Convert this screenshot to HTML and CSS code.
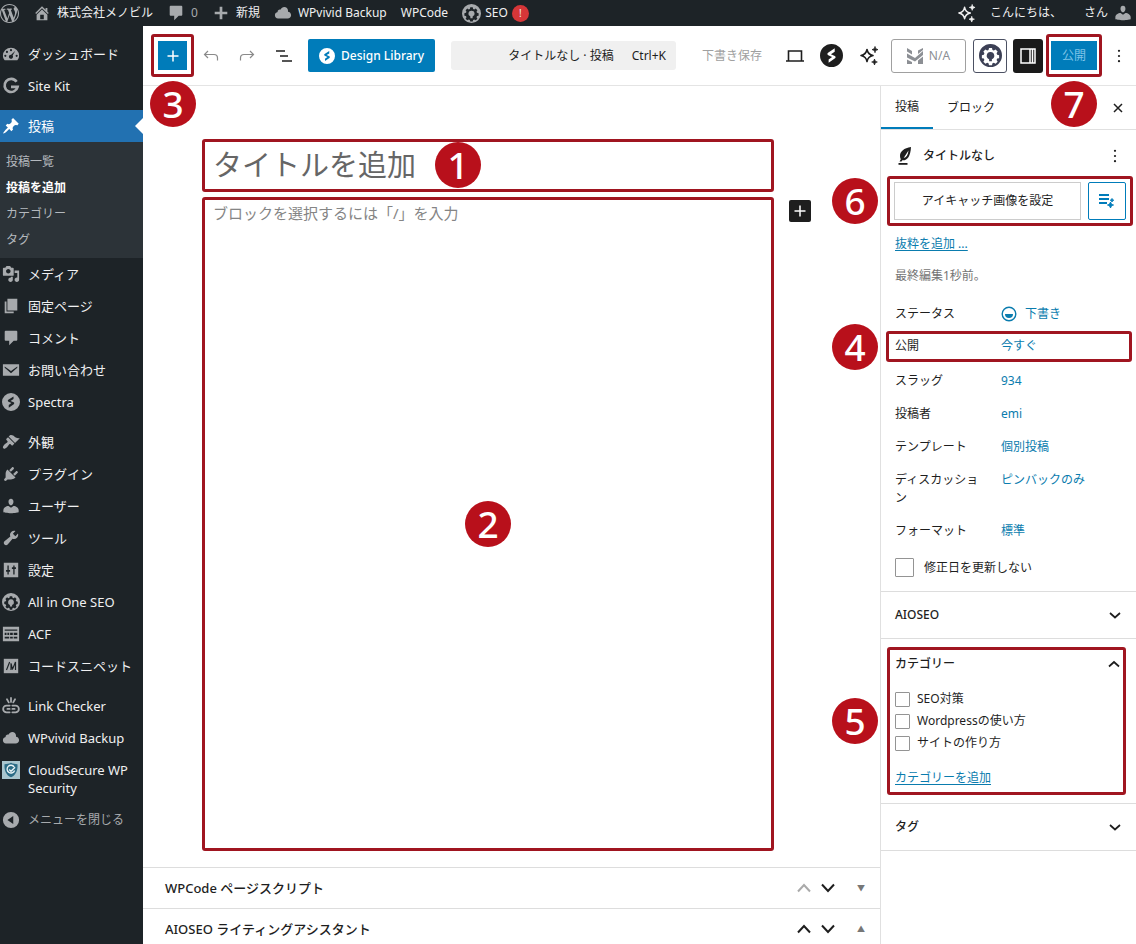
FILE: index.html
```html
<!DOCTYPE html>
<html lang="ja">
<head>
    <meta charset="UTF-8">
    <meta name="viewport" content="width=device-width, initial-scale=1.0">
    <title>投稿を追加 - 株式会社メノビル</title>
    <link rel="stylesheet" href="styles.css">
</head>
<body>
    <!-- Shared icons -->
    <svg class="sprite" aria-hidden="true">
        <symbol id="i-wp" viewBox="0 0 20 20"><path d="M20 10c0-5.51-4.49-10-10-10C4.48 0 0 4.49 0 10c0 5.52 4.48 10 10 10 5.51 0 10-4.48 10-10zM7.78 15.37L4.37 6.22c.55-.02 1.17-.08 1.17-.08.5-.06.44-1.13-.06-1.11 0 0-1.45.11-2.37.11-.18 0-.37 0-.58-.01C4.12 2.69 6.87 1.11 10 1.11c2.33 0 4.45.87 6.05 2.34-.68-.11-1.65.39-1.65 1.58 0 .74.45 1.36.9 2.1.35.61.55 1.36.55 2.46 0 1.49-1.4 5-1.4 5l-3.03-8.37c.54-.02.82-.17.82-.17.5-.05.44-1.25-.06-1.22 0 0-1.44.12-2.38.12-.87 0-2.33-.12-2.33-.12-.5-.03-.56 1.2-.06 1.22l.92.08 1.26 3.41zM17.41 10c.24-.64.74-1.87.43-4.25.7 1.29 1.05 2.71 1.05 4.25 0 3.29-1.73 6.24-4.4 7.78.97-2.59 1.94-5.2 2.92-7.78zM6.1 18.09C3.12 16.65 1.11 13.53 1.11 10c0-1.3.23-2.48.72-3.59C3.25 10.3 4.67 14.2 6.1 18.09zm4.03-6.63l2.58 6.98c-.86.29-1.76.45-2.71.45-.79 0-1.57-.11-2.29-.33.81-2.38 1.62-4.74 2.42-7.1z"/></symbol>
        <symbol id="i-home" viewBox="0 0 20 20"><path d="M16 8.5l1.53 1.53-1.06 1.06L10 4.6l-6.47 6.49-1.06-1.06L10 2.5l4 4v-2h2v4zm-6-2.46l6 5.99V18H4v-5.97zM12 17v-5H8v5h4z"/></symbol>
        <symbol id="i-comment" viewBox="0 0 20 20"><path d="M4 2h12c.6 0 1 .4 1 1v9c0 .6-.4 1-1 1h-3l-5 5v-5H4c-.6 0-1-.4-1-1V3c0-.6.4-1 1-1z"/></symbol>
        <symbol id="i-plus" viewBox="0 0 20 20"><path d="M17 8.500v3h-5.500V17h-3v-5.500H3v-3h5.500V3h3v5.500z"/></symbol>
        <symbol id="i-cloud" viewBox="0 0 20 20"><path d="M15.500 8.500c2 .2 3.500 1.800 3.500 3.900 0 2.100-1.700 3.600-3.800 3.600H4.500C2.400 16 1 14.400 1 12.500 1 10.700 2.300 9.300 4.100 9 4 8.900 4 8.700 4 8.500 4 7.100 5.100 6 6.500 6c.3 0 .7.1.9.2C8.100 4.400 9.600 3.200 11.400 3.200c2.300 0 4.200 1.800 4.200 4.200 0 .4 0 .8-.1 1.100z"/></symbol>
        <symbol id="i-gear" viewBox="0 0 20 20"><path fill-rule="evenodd" d="M10 0a10 10 0 1 0 0 20a10 10 0 0 0 0-20zM8.700 3.500h2.600l.4 1.700 1.200.5 1.500-.9 1.800 1.800-.9 1.500.5 1.200 1.700.4v2.600l-1.700.4-.5 1.200.9 1.500-1.800 1.800-1.500-.9-1.200.5-.4 1.700H8.700l-.4-1.700-1.200-.5-1.500.9-1.800-1.800.9-1.500-.5-1.200-1.700-.4V9.700l1.700-.4.5-1.200-.9-1.500 1.800-1.800 1.500.9 1.200-.5zM10 7a3.200 3.200 0 0 0-1.200 6.200V15h2.400v-1.800A3.200 3.200 0 0 0 10 7z"/></symbol>
        <symbol id="i-sparkle" viewBox="0 0 20 20"><path d="M8 3.500c.7 3.800 2.100 5.200 6 6-3.900.8-5.300 2.200-6 6-.7-3.800-2.100-5.200-6-6 3.900-.8 5.300-2.200 6-6z" fill="none" stroke="currentColor" stroke-width="1.600" stroke-linejoin="round"/><path d="M16 .5c.4 2 1.100 2.700 3 3.100-1.900.4-2.600 1.100-3 3.100-.4-2-1.100-2.700-3-3.100 1.900-.4 2.600-1.100 3-3.100zM15.500 13c.3 1.900 1 2.600 2.800 3-1.800.4-2.500 1.100-2.800 3-.3-1.900-1-2.600-2.800-3 1.800-.4 2.500-1.100 2.800-3z" stroke="currentColor" stroke-width=".8"/></symbol>
        <symbol id="i-user" viewBox="0 0 20 20"><path d="M10 9.250c-2.270 0-2.730-3.440-2.730-3.440C7 4.020 7.820 2 9.970 2c2.160 0 2.980 2.020 2.710 3.810 0 0-.41 3.440-2.680 3.440zm0 2.570L12.720 10c2.900 0 5.800 2.330 5.800 4.530v2.490s-4.650 1.130-8.500 1.130c-3.900 0-8.500-1.130-8.500-1.130v-2.490c0-2.250 2.940-4.480 5.750-4.480z"/></symbol>
        <symbol id="i-spectra" viewBox="0 0 20 20"><path fill-rule="evenodd" d="M10 0a10 10 0 1 0 0 20a10 10 0 0 0 0-20zM12.800 3.800v3L9.500 8.900l3.400 1.500c.8.4.9 1.500.2 2l-5.600 4v-3l3-2.200-3.300-1.500c-.9-.4-1-1.500-.2-2.100z"/></symbol>
        <symbol id="i-down" viewBox="0 0 16 16"><path d="M3 6l5 4.500L13 6" fill="none" stroke="currentColor" stroke-width="1.700"/></symbol>
        <symbol id="i-up" viewBox="0 0 16 16"><path d="M3 10.500L8 6l5 4.500" fill="none" stroke="currentColor" stroke-width="1.700"/></symbol>
        <symbol id="i-move-down" viewBox="0 0 16 16"><path d="M2 4.500l6 6.500 6-6.500" fill="none" stroke="currentColor" stroke-width="2"/></symbol>
        <symbol id="i-move-up" viewBox="0 0 16 16"><path d="M2 11.500L8 5l6 6.500" fill="none" stroke="currentColor" stroke-width="2"/></symbol>
        <symbol id="i-dots" viewBox="0 0 20 20"><circle cx="10" cy="3.500" r="1.400"/><circle cx="10" cy="10" r="1.400"/><circle cx="10" cy="16.500" r="1.400"/></symbol>
        <symbol id="i-add" viewBox="0 0 16 16"><path d="M8 2.500v11M2.500 8h11" fill="none" stroke="currentColor" stroke-width="1.500"/></symbol>
    </svg>

    <header class="adminbar">
        <a href="#" aria-label="WordPress"><svg class="icon icon-lg"><use href="#i-wp"/></svg></a>
        <a href="#"><svg class="icon"><use href="#i-home"/></svg>株式会社メノビル</a>
        <a href="#" class="bar-comments"><svg class="icon"><use href="#i-comment"/></svg><span>0</span></a>
        <a href="#"><svg class="icon"><use href="#i-plus"/></svg>新規</a>
        <a href="#"><svg class="icon"><use href="#i-cloud"/></svg>WPvivid Backup</a>
        <a href="#">WPCode</a>
        <a href="#" class="bar-seo"><svg class="icon icon-lg"><use href="#i-gear"/></svg>SEO<span class="alert">!</span></a>
        <a href="#" class="bar-ai" aria-label="AI"><svg class="icon icon-lg"><use href="#i-sparkle"/></svg></a>
        <a href="#" class="bar-user"><span>こんにちは、</span><span>さん</span><svg class="icon"><use href="#i-user"/></svg></a>
    </header>

    <div class="layout">
        <nav class="menu">
            <ul>
                <li><a href="#"><svg class="icon" viewBox="0 0 20 20"><path fill-rule="evenodd" d="M3 17h14c1.200-1.300 2-3 2-5a9 9 0 0 0-18 0c0 2 .8 3.700 2 5zM10 4.500a1.200 1.200 0 1 1 0 2.400a1.200 1.200 0 0 1 0-2.400zM5.500 6.500a1.200 1.200 0 1 1 0 2.400a1.200 1.200 0 0 1 0-2.400zM3.700 10.800a1.200 1.200 0 1 1 0 2.400a1.200 1.200 0 0 1 0-2.400zM16.300 10.800a1.200 1.200 0 1 1 0 2.400a1.200 1.200 0 0 1 0-2.400zM14.800 6.500l-3 5.200a2.300 2.300 0 1 1-1.600-.9z"/></svg>ダッシュボード</a></li>
                <li><a href="#"><svg class="icon" viewBox="0 0 20 20"><path d="M16.200 5.200A7.300 7.300 0 1 0 17.300 11H10" fill="none" stroke="currentColor" stroke-width="3"/></svg>Site Kit</a></li>
            </ul>
            <ul>
                <li class="current"><a href="#"><svg class="icon" viewBox="0 0 20 20"><path d="M10.440 3.020l1.820-1.820 6.360 6.350-1.830 1.820c-1.050-.68-2.480-.57-3.410.36l-.75.75c-.92.930-1.040 2.350-.35 3.410l-1.830 1.820-2.410-2.410-2.800 2.790c-.42.42-3.380 2.710-3.800 2.290s1.860-3.390 2.280-3.810l2.790-2.790L4.100 9.360l1.830-1.820c1.050.69 2.480.57 3.400-.36l.75-.75c.93-.92 1.050-2.350.36-3.410z"/></svg>投稿</a></li>
            </ul>
            <ul class="submenu">
                <li><a href="#">投稿一覧</a></li>
                <li><a href="#" class="active">投稿を追加</a></li>
                <li><a href="#">カテゴリー</a></li>
                <li><a href="#">タグ</a></li>
            </ul>
            <ul>
                <li><a href="#"><svg class="icon" viewBox="0 0 20 20"><path d="M13 11V4c0-.55-.45-1-1-1h-1.670L9 1H5L3.670 3H2c-.55 0-1 .45-1 1v7c0 .55.45 1 1 1h10c.55 0 1-.45 1-1zM7 4.500c1.380 0 2.500 1.120 2.500 2.500S8.380 9.500 7 9.500 4.500 8.380 4.500 7 5.620 4.500 7 4.500zM14 6h5v10.500c0 1.380-1.120 2.500-2.500 2.500S14 17.880 14 16.500s1.120-2.500 2.500-2.500c.17 0 .34.02.5.05V9h-3V6zm-4 8.050V13h2v3.500c0 1.380-1.120 2.500-2.500 2.500S7 17.880 7 16.500 8.120 14 9.500 14c.17 0 .34.02.5.05z"/></svg>メディア</a></li>
                <li><a href="#"><svg class="icon" viewBox="0 0 20 20"><path d="M6 15V2h11v13H6zm-1 1h8v2H3V5h2v11z"/></svg>固定ページ</a></li>
                <li><a href="#"><svg class="icon"><use href="#i-comment"/></svg>コメント</a></li>
                <li><a href="#"><svg class="icon" viewBox="0 0 20 20"><path fill-rule="evenodd" d="M1 3.500h18v13H1zM3 6v1.500l7 6 7-6V6l-7 5z"/></svg>お問い合わせ</a></li>
                <li><a href="#"><svg class="icon"><use href="#i-spectra"/></svg>Spectra</a></li>
            </ul>
            <ul>
                <li><a href="#"><svg class="icon" viewBox="0 0 20 20"><path d="M14.480 11.060L7.410 3.990l1.500-1.500c.5-.56 2.300-.47 3.510.32 1.210.8 1.430 1.280 2.910 2.100 1.180.64 2.450 1.260 4.450.85zm-.71.71L6.700 4.700 4.930 6.470c-.39.39-.39 1.020 0 1.410l1.060 1.060c.39.39.39 1.030 0 1.420-.6.6-1.430 1.110-2.210 1.690-.35.26-.7.53-1.010.84C1.430 14.230.4 16.080 1.400 17.070c.99 1 2.840-.03 4.180-1.360.31-.31.58-.66.85-1.020.57-.78 1.080-1.610 1.690-2.210.39-.39 1.020-.39 1.410 0l1.060 1.060c.39.39 1.020.39 1.410 0z"/></svg>外観</a></li>
                <li><a href="#"><svg class="icon" viewBox="0 0 20 20"><path d="M13.110 4.360L9.870 7.600 8 5.730l3.240-3.240c.35-.34 1.050-.2 1.560.32.52.51.66 1.210.31 1.550zm-8 1.770l.91-1.120 9.010 9.010-1.190.84c-.71.71-2.630 1.160-3.820 1.160H6.140L4.900 17.260c-.59.59-1.540.59-2.120 0-.59-.58-.59-1.530 0-2.120l1.240-1.240v-3.880c0-1.130.4-3.190 1.090-3.890zm7.260 3.970l3.240-3.240c.34-.35 1.040-.21 1.550.31.52.51.66 1.210.31 1.550l-3.240 3.250z"/></svg>プラグイン</a></li>
                <li><a href="#"><svg class="icon"><use href="#i-user"/></svg>ユーザー</a></li>
                <li><a href="#"><svg class="icon" viewBox="0 0 20 20"><path d="M16.680 9.770c-1.340 1.340-3.300 1.670-4.950.99l-5.410 6.520c-.99.99-2.590.99-3.580 0s-.99-2.590 0-3.570l6.520-5.420c-.68-1.650-.35-3.610.99-4.950 1.280-1.280 3.120-1.620 4.720-1.060l-2.890 2.890 2.820 2.820 2.860-2.870c.53 1.580.18 3.390-1.080 4.650z"/></svg>ツール</a></li>
                <li><a href="#"><svg class="icon" viewBox="0 0 20 20"><path fill-rule="evenodd" d="M2 2h16v16H2zM6 5v5H4.500v2H6v3h1.500v-3H9v-2H7.500V5zM12.500 5v2H11v2h1.500v6H14V9h1.500V7H14V5z"/></svg>設定</a></li>
                <li><a href="#"><svg class="icon"><use href="#i-gear"/></svg>All in One SEO</a></li>
                <li><a href="#"><svg class="icon" viewBox="0 0 20 20"><path fill-rule="evenodd" d="M1 2h18v16H1zM3 5v1.500h14V5zM3 8.500V11h2V8.500zM6 8.500V11h2V8.500zM9 8.500V11h3V8.500zM13 8.500V11h4V8.500zM3 13v2h5v-2zM9 13v2h3v-2zM13 13v2h4v-2z"/></svg>ACF</a></li>
                <li><a href="#"><svg class="icon" viewBox="0 0 20 20"><path d="M2 2h16v16H2z"/><path d="M5 14.500l3.500-9M10 14.500V7M10 7l1.500 6M11.500 14l3.500-8.500v9" fill="none" stroke="#1d2327" stroke-width="1.300"/></svg>コードスニペット</a></li>
            </ul>
            <ul>
                <li><a href="#"><svg class="icon" viewBox="0 0 20 20"><path d="M8.500 9.500H5a3.700 3.700 0 0 0 0 7.500h3.500M11.500 9.500H15a3.700 3.700 0 0 1 0 7.500h-3.500M6 13.200h2.500M11.500 13.200H14M10 1v4.500M5.500 2.500l2 3.500M14.500 2.500l-2 3.500" fill="none" stroke="currentColor" stroke-width="2" stroke-linecap="round"/></svg>Link Checker</a></li>
                <li><a href="#"><svg class="icon"><use href="#i-cloud"/></svg>WPvivid Backup</a></li>
                <li><a href="#"><svg class="icon" viewBox="0 0 20 20"><path fill="#a9c6cf" d="M0 0h20v20H0z"/><path fill="#2b6c86" d="M10 2c2.500 1.200 4.500 1.500 7.200 1.500C17.800 11 15 15.800 10 18 5 15.800 2.200 11 2.800 3.500 5.500 3.500 7.500 3.200 10 2z"/><path d="M13.500 6.500A4.300 4.300 0 1 0 14 10.500M8 9.500l2 2 4.500-4.500" fill="none" stroke="#e8f3f6" stroke-width="1.500"/></svg>CloudSecure WP Security</a></li>
                <li><a href="#" class="collapse"><svg class="icon" viewBox="0 0 20 20"><path fill-rule="evenodd" d="M10 1a9 9 0 1 0 0 18a9 9 0 0 0 0-18zM12.500 5.500v9L6 10z"/></svg>メニューを閉じる</a></li>
            </ul>
        </nav>

        <main class="editor">
            <div class="toolbar">
                <div class="marked marked-tool">
                    <button class="btn-add" aria-label="ブロックを追加"><svg class="glyph"><use href="#i-add"/></svg></button>
                    <span class="num num-below">3</span>
                </div>
                <button class="tool" aria-label="元に戻す"><svg class="glyph muted" viewBox="0 0 16 16"><path d="M5 3L1.500 6.500 5 10M1.500 6.500H11c2.500 0 3.500 1.500 3.500 3.500v2.500" fill="none" stroke="currentColor" stroke-width="1.200"/></svg></button>
                <button class="tool" aria-label="やり直す"><svg class="glyph muted" viewBox="0 0 16 16"><path d="M11 3l3.500 3.500L11 10M14.500 6.500H5C2.500 6.500 1.500 8 1.500 10v2.500" fill="none" stroke="currentColor" stroke-width="1.200"/></svg></button>
                <button class="tool" aria-label="ドキュメント概観"><svg class="glyph" viewBox="0 0 16 16"><path d="M0 3h9M4 8h8M6 13h10" fill="none" stroke="currentColor" stroke-width="1.600"/></svg></button>
                <button class="btn-library"><svg class="glyph"><use href="#i-spectra"/></svg>Design Library</button>
                <button class="docbar"><span>タイトルなし · 投稿</span><span>Ctrl+K</span></button>
                <button class="save">下書き保存</button>
                <button class="tool" aria-label="表示"><svg class="glyph glyph-lg" viewBox="0 0 20 20"><path d="M3.500 14.500V5h13v9.500M1 15h18" fill="none" stroke="currentColor" stroke-width="1.600"/></svg></button>
                <button class="tool" aria-label="Spectra"><svg class="glyph glyph-xl"><use href="#i-spectra"/></svg></button>
                <button class="tool" aria-label="AI"><svg class="glyph glyph-lg"><use href="#i-sparkle"/></svg></button>
                <button class="btn-score"><svg class="glyph" viewBox="0 0 16 16"><path d="M0 0l5 3v3.500L0 3.500zM0 5.500l8 4.500 8-7v4l-8 6.500-8-4zM0 11.500l5 2.500v2H0zM11 2.500L16 0v2l-5 4zM11 12.500l5-4V16h-5z"/></svg>N/A</button>
                <button class="btn-box" aria-label="AIOSEO"><svg class="glyph glyph-xl"><use href="#i-gear"/></svg></button>
                <button class="btn-box btn-dark" aria-label="設定サイドバー"><svg class="glyph" viewBox="0 0 16 16"><path d="M1 1h14v14H1zM10 1v14M12.500 1v14" fill="none" stroke="currentColor" stroke-width="1.500"/></svg></button>
                <div class="marked marked-tool marked-publish">
                    <button class="btn-publish">公開</button>
                    <span class="num num-below">7</span>
                </div>
                <button class="tool tool-end" aria-label="オプション"><svg class="glyph"><use href="#i-dots"/></svg></button>
            </div>

            <div class="workspace">
                <div class="content">
                    <div class="canvas">
                        <div class="marked title-box">
                            <input type="text" class="post-title" placeholder="タイトルを追加" aria-label="タイトル">
                            <span class="num num-title">1</span>
                        </div>
                        <div class="marked block-box">
                            <textarea class="post-body" placeholder="ブロックを選択するには「/」を入力" aria-label="本文"></textarea>
                            <button class="inserter" aria-label="ブロックを追加"><svg class="glyph"><use href="#i-add"/></svg></button>
                            <span class="num num-body">2</span>
                        </div>
                    </div>
                    <div class="metaboxes">
                        <div class="metabox">
                            <h2>WPCode ページスクリプト</h2>
                            <button class="disabled" aria-label="上に移動"><svg class="glyph"><use href="#i-move-up"/></svg></button>
                            <button aria-label="下に移動"><svg class="glyph"><use href="#i-move-down"/></svg></button>
                            <button class="toggle" aria-label="開く">▼</button>
                        </div>
                        <div class="metabox">
                            <h2>AIOSEO ライティングアシスタント</h2>
                            <button aria-label="上に移動"><svg class="glyph"><use href="#i-move-up"/></svg></button>
                            <button aria-label="下に移動"><svg class="glyph"><use href="#i-move-down"/></svg></button>
                            <button class="toggle" aria-label="閉じる">▲</button>
                        </div>
                    </div>
                </div>

                <aside class="settings">
                    <div class="tabs">
                        <button class="tab selected">投稿</button>
                        <button class="tab">ブロック</button>
                        <button class="close" aria-label="閉じる"><svg class="glyph" viewBox="0 0 16 16"><path d="M4 4l8 8M12 4l-8 8" fill="none" stroke="currentColor" stroke-width="1.500"/></svg></button>
                    </div>

                    <section class="summary">
                        <div class="card-title">
                            <svg class="glyph glyph-lg" viewBox="0 0 20 20"><path fill-rule="evenodd" d="M16 1C9 2 5 5.500 5 10c0 1.300.3 2.300.8 3.200L4.500 15.500h2l.8-1.200c4.700.5 8.200-3.300 8.700-13.300zM13.500 4.500C13 9 11.500 11.500 8.700 12z"/><path d="M3.500 17h9v1.800h-9z"/></svg>
                            <h2>タイトルなし</h2>
                            <button aria-label="操作"><svg class="glyph"><use href="#i-dots"/></svg></button>
                        </div>
                        <div class="marked featured">
                            <button class="btn-image">アイキャッチ画像を設定</button>
                            <button class="btn-auto" aria-label="画像を生成"><svg class="glyph glyph-lg" viewBox="0 0 20 20"><path d="M2 4h10M2 8h10M2 12h8" fill="none" stroke="currentColor" stroke-width="1.800"/><path d="M15 7.500c.3 1 .8 1.400 1.700 1.700-.9.300-1.400.7-1.700 1.700-.3-1-.8-1.400-1.700-1.700.9-.3 1.400-.7 1.700-1.700zM13.500 11c.5 1.800 1.200 2.500 3 3-1.800.5-2.500 1.200-3 3-.5-1.800-1.200-2.500-3-3 1.800-.5 2.500-1.200 3-3z" stroke="currentColor"/></svg></button>
                            <span class="num num-side">6</span>
                        </div>
                        <a href="#" class="excerpt">抜粋を追加 ...</a>
                        <p class="edited">最終編集1秒前。</p>

                        <div class="row"><span>ステータス</span><button><svg class="glyph" viewBox="0 0 16 16"><circle cx="8" cy="8" r="6.800" fill="none" stroke="currentColor" stroke-width="1.400"/><path d="M4 8h8a4 4 0 0 1-8 0z"/></svg>下書き</button></div>
                        <div class="row marked row-marked"><span>公開</span><button>今すぐ</button><b class="num num-side">4</b></div>
                        <div class="row"><span>スラッグ</span><button>934</button></div>
                        <div class="row"><span>投稿者</span><button>emi</button></div>
                        <div class="row"><span>テンプレート</span><button>個別投稿</button></div>
                        <div class="row"><span>ディスカッション</span><button>ピンバックのみ</button></div>
                        <div class="row"><span>フォーマット</span><button>標準</button></div>
                        <label class="keep-date"><input type="checkbox">修正日を更新しない</label>
                    </section>

                    <section class="panel">
                        <button class="panel-head">AIOSEO<svg class="glyph"><use href="#i-down"/></svg></button>
                    </section>
                    <section class="panel panel-open">
                        <div class="marked categories">
                            <button class="panel-head">カテゴリー<svg class="glyph"><use href="#i-up"/></svg></button>
                            <label><input type="checkbox">SEO対策</label>
                            <label><input type="checkbox">Wordpressの使い方</label>
                            <label><input type="checkbox">サイトの作り方</label>
                            <a href="#">カテゴリーを追加</a>
                            <span class="num num-side">5</span>
                        </div>
                    </section>
                    <section class="panel">
                        <button class="panel-head">タグ<svg class="glyph"><use href="#i-down"/></svg></button>
                    </section>
                </aside>
            </div>
        </main>
    </div>
</body>
</html>
```
FILE: styles.css
```css
* {
    box-sizing: border-box;
}
body {
    margin: 0;
    height: 100vh;
    overflow: hidden;
    display: flex;
    flex-direction: column;
    font-family: "Noto Sans", "Noto Sans CJK JP", sans-serif;
    font-size: 12px;
    line-height: 18px;
    color: #1e1e1e;
    background: #fff;
}
button, input, textarea {
    font: inherit;
    color: inherit;
}
button {
    display: flex;
    align-items: center;
    justify-content: center;
    padding: 0;
    border: none;
    background: none;
    cursor: pointer;
}
ul {
    list-style: none;
    margin: 0;
    padding: 0;
}
h2 {
    margin: 0;
    font-size: 12px;
    font-weight: 500;
}
svg {
    fill: currentColor;
    flex: none;
}
.sprite {
    display: none;
}
.icon {
    width: 18px;
    height: 18px;
    color: #a7aaad;
}
.icon-lg {
    width: 19px;
    height: 19px;
}
.glyph {
    width: 16px;
    height: 16px;
}
.glyph-lg {
    width: 20px;
    height: 20px;
}
.glyph-xl {
    width: 23px;
    height: 23px;
}
.muted {
    color: #8a8a8a;
}

/* Admin bar */
.adminbar {
    flex: none;
    display: flex;
    align-items: center;
    gap: 14px;
    height: 26px;
    padding-right: 4px;
    background: #1d2327;
}
.adminbar a {
    display: flex;
    align-items: center;
    gap: 6px;
    color: #f0f0f1;
    text-decoration: none;
    white-space: nowrap;
}
.bar-comments span {
    color: #a7aaad;
}
.adminbar .bar-seo {
    gap: 4px;
}
.alert {
    width: 17px;
    height: 17px;
    border-radius: 50%;
    background: #d63638;
    font-size: 10px;
    line-height: 17px;
    text-align: center;
}
.bar-ai {
    margin-left: auto;
}
.bar-ai .icon {
    color: #f0f0f1;
}
.adminbar .bar-user span + span {
    margin-left: 16px;
}

/* Left menu */
.layout {
    flex: 1;
    display: flex;
    min-height: 0;
}
.menu {
    flex: none;
    width: 143px;
    padding-top: 12px;
    background: #1d2327;
    font-size: 13px;
    line-height: 18px;
}
.menu ul + ul {
    margin-top: 8px;
}
.menu a {
    display: flex;
    align-items: flex-start;
    gap: 8px;
    padding: 7px 8px 7px 2px;
    color: #f0f0f1;
    text-decoration: none;
}
.menu li {
    position: relative;
}
.menu .current a {
    background: #2271b1;
    color: #fff;
}
.menu .current .icon {
    color: #fff;
}
.current::after {
    content: "";
    position: absolute;
    top: 8px;
    right: 0;
    border: 8px solid transparent;
    border-left: none;
    border-right-color: #fff;
}
.menu ul.submenu {
    margin: 0;
    padding: 7px 0 5px;
    background: #2c3338;
    font-size: 12px;
}
.menu .submenu + ul {
    margin-top: 0;
}
.menu .submenu a {
    padding: 4px 6px;
    color: #b4b9be;
}
.menu .submenu .active {
    color: #fff;
    font-weight: 700;
}
.menu .collapse {
    color: #a7aaad;
    font-size: 12px;
}

/* Numbered callouts */
.marked {
    position: relative;
    border: 3px solid #a01520;
    border-radius: 3px;
}
.num {
    position: absolute;
    z-index: 2;
    width: 46px;
    height: 46px;
    border-radius: 50%;
    background: #b8101b;
    color: #fff;
    font-size: 37px;
    font-weight: 500;
    line-height: 46px;
    text-align: center;
    pointer-events: none;
}
.num-below {
    top: 44px;
    left: -4px;
}
.num-title {
    top: 0;
    left: 230px;
}
.num-body {
    top: 50%;
    left: 50%;
    transform: translate(-50%, -50%);
}
.num-side {
    top: 50%;
    left: -58px;
    transform: translateY(-50%);
}

/* Toolbar */
.editor {
    flex: 1;
    min-width: 0;
    display: flex;
    flex-direction: column;
}
.toolbar {
    flex: none;
    display: flex;
    align-items: center;
    height: 60px;
    padding: 0 8px;
    border-bottom: 1px solid #e4e4e4;
}
.marked-tool {
    padding: 4px;
}
.btn-add {
    width: 29px;
    height: 29px;
    background: #007cba;
    color: #fff;
}
.tool {
    width: 37px;
    height: 32px;
}
.tool-end {
    width: 34px;
    margin-right: -8px;
}
.marked-tool + .tool {
    width: 34px;
}
.btn-library {
    gap: 6px;
    height: 33px;
    margin-left: 6px;
    padding: 0 11px;
    border-radius: 2px;
    background: #007cba;
    color: #fff;
    font-weight: 500;
    white-space: nowrap;
}
.docbar {
    flex: 1;
    justify-content: flex-end;
    gap: 18px;
    height: 29px;
    margin: 0 26px 0 16px;
    padding: 0 10px;
    border-radius: 3px;
    background: #f0f0f0;
    white-space: nowrap;
}
.save {
    margin-right: 14px;
    color: #a0a0a0;
    white-space: nowrap;
}
.btn-score {
    gap: 6px;
    width: 75px;
    height: 34px;
    margin-left: 4px;
    border: 1px solid #a0a0a0;
    border-radius: 3px;
    color: #8c8f94;
}
.btn-box {
    width: 34px;
    height: 34px;
    margin-left: 7px;
    border: 1px solid #4c5163;
    border-radius: 3px;
    color: #3c4055;
}
.btn-dark {
    width: 30px;
    margin-left: 6px;
    border: none;
    background: #1a1a1a;
    color: #fff;
}
.marked-publish {
    margin-left: 3px;
    padding: 4px 2px;
}
.marked-publish .num {
    left: 2px;
}
.btn-publish {
    width: 46px;
    height: 29px;
    background: #007cba;
    color: #7fc4e8;
}

/* Canvas */
.workspace {
    flex: 1;
    display: flex;
    min-height: 0;
}
.content {
    flex: 1;
    min-width: 0;
    display: flex;
    flex-direction: column;
}
.canvas {
    flex: 1;
    display: flex;
    flex-direction: column;
    gap: 5px;
    padding: 53px 106px 16px 59px;
}
.title-box, .block-box {
    display: flex;
}
.block-box {
    flex: 1;
}
.post-title, .post-body {
    flex: 1;
    border: none;
    outline: none;
    resize: none;
    background: none;
}
.post-title {
    min-width: 0;
    padding: 0 8px 2px;
    font-size: 29px;
    height: 47px;
}
.post-body {
    padding: 2px 8px;
    font-size: 15px;
    line-height: 22px;
}
.post-title::placeholder {
    color: #666;
}
.post-body::placeholder {
    color: #858585;
}
.inserter {
    position: absolute;
    top: 0;
    right: -40px;
    width: 22px;
    height: 22px;
    border-radius: 2px;
    background: #1e1e1e;
    color: #fff;
}
.metaboxes {
    max-height: 77px;
    overflow: hidden;
}
.metabox {
    display: flex;
    align-items: center;
    gap: 8px;
    padding: 11px 14px 11px 22px;
    border-top: 1px solid #ddd;
}
.metabox h2 {
    flex: 1;
    font-size: 13px;
}
.metabox .disabled {
    color: #aaa;
}
.metabox .toggle {
    width: 10px;
    margin-left: 12px;
    color: #777;
    font-size: 8px;
}

/* Settings sidebar */
.settings {
    flex: none;
    width: 256px;
    border-left: 1px solid #e0e0e0;
}
.tabs {
    display: flex;
    height: 44px;
    border-bottom: 1px solid #e0e0e0;
}
.tab {
    padding: 0 14px;
}
.selected {
    border-bottom: 2px solid #007cba;
}
.close {
    margin-left: auto;
    padding-right: 10px;
}
.summary {
    padding: 9px 15px 14px 14px;
}
.card-title {
    display: flex;
    align-items: center;
    gap: 8px;
    height: 34px;
}
.card-title h2 {
    flex: 1;
}
.card-title button {
    margin-right: -2px;
}
.featured {
    display: flex;
    gap: 7px;
    margin: 3px -12px 0 -8px;
    padding: 3px 4px;
}
.btn-image {
    flex: 1;
    border: 1px solid #ccc;
}
.btn-auto {
    width: 38px;
    height: 38px;
    border: 1px solid #007cba;
    border-radius: 2px;
    color: #007cba;
}
.settings a {
    color: #0a7cae;
    text-underline-offset: 2px;
}
.excerpt {
    display: block;
    margin-top: 9px;
}
.edited {
    margin: 14px 0 12px;
    color: #757575;
}
.row {
    display: flex;
    align-items: flex-start;
    padding: 8px 0 7px;
}
.row span {
    width: 90px;
    margin-right: 16px;
}
.row button {
    gap: 8px;
    color: #0a7cae;
}
.row-marked {
    margin: 1px -11px 2px -9px;
    padding: 3px 6px 4px;
}
.row-marked .num {
    left: -57px;
}
input[type="checkbox"] {
    appearance: none;
    flex: none;
    width: 15px;
    height: 15px;
    margin: 0;
    border: 1px solid #949494;
    border-radius: 1px;
    background: #fff;
}
.keep-date {
    display: flex;
    align-items: center;
    gap: 10px;
    padding-top: 11px;
}
.keep-date input {
    width: 19px;
    height: 19px;
}
.panel {
    padding: 0 13px 0 14px;
    border-top: 1px solid #ddd;
}
.panel:last-child {
    border-bottom: 1px solid #ddd;
}
.panel-head {
    width: 100%;
    height: 46px;
    justify-content: space-between;
    font-weight: 500;
}
.panel-open {
    padding: 8px 10px 8px 6px;
}
.categories {
    padding: 0 1px 5px 5px;
}
.categories .panel-head {
    height: 28px;
    margin-bottom: 10px;
}
.categories label {
    display: flex;
    align-items: center;
    gap: 7px;
    height: 22px;
}
.categories a {
    display: block;
    margin-top: 15px;
}
```
